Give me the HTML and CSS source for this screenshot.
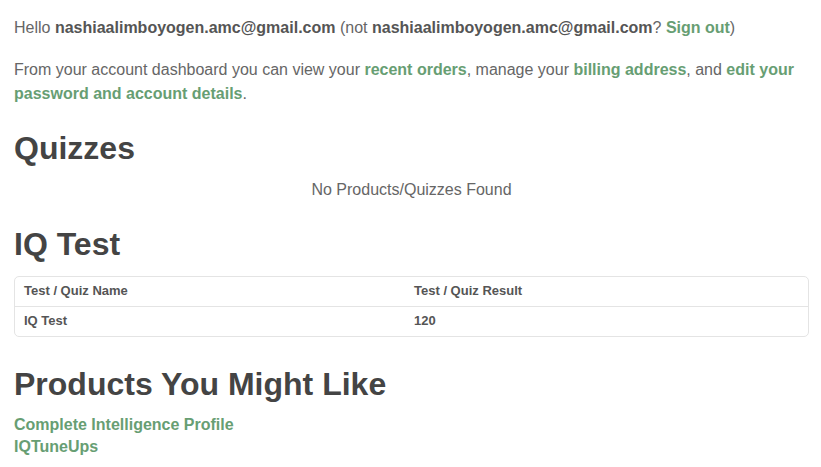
FILE: index.html
```html
<!DOCTYPE html>
<html lang="en">
<head>
    <meta charset="UTF-8">
    <meta name="viewport" content="width=device-width, initial-scale=1.0">
    <title>My Account</title>
    <link rel="stylesheet" href="styles.css">
</head>
<body>
    <div class="account">
        <p class="greeting">Hello <strong>nashiaalimboyogen.amc@gmail.com</strong> (not <strong>nashiaalimboyogen.amc@gmail.com</strong>? <a href="#">Sign out</a>)</p>

        <p class="intro">From your account dashboard you can view your <a href="#">recent orders</a>, manage your <a href="#">billing address</a>, and <a href="#">edit your password and account details</a>.</p>

        <!-- Quizzes -->
        <h2>Quizzes</h2>
        <div class="empty">No Products/Quizzes Found</div>

        <!-- Results -->
        <h2>IQ Test</h2>
        <div class="results">
            <table>
                <thead>
                    <tr>
                        <th class="name-col">Test / Quiz Name</th>
                        <th>Test / Quiz Result</th>
                    </tr>
                </thead>
                <tbody>
                    <tr>
                        <td>IQ Test</td>
                        <td>120</td>
                    </tr>
                </tbody>
            </table>
        </div>

        <!-- Suggestions -->
        <h2 class="suggest-title">Products You Might Like</h2>
        <ul class="products">
            <li><a href="#">Complete Intelligence Profile</a></li>
            <li><a href="#">IQTuneUps</a></li>
        </ul>
    </div>
</body>
</html>
```

FILE: styles.css
```css
body {
    font-family: "Liberation Sans", Arial, sans-serif;
    font-size: 16px;
    line-height: 24px;
    color: #666;
    margin: 0;
    padding: 0;
    background-color: #fff;
}
.account {
    width: 795px;
    padding: 16px 12px 0 14px;
}
p {
    margin: 0;
}
strong {
    color: #555;
}
a {
    color: #679e73;
    font-weight: bold;
    text-decoration: none;
}
.intro {
    margin-top: 18px;
}
h2 {
    font-size: 32px;
    line-height: 38px;
    color: #444;
    margin: 23px 0 11px;
}
.empty {
    text-align: center;
}
.results {
    border: 1px solid #e4e4e4;
    border-radius: 5px;
    margin-top: 13px;
}
table {
    width: 100%;
    border-collapse: collapse;
    font-size: 13px;
    line-height: 16px;
    color: #555;
}
th, td {
    text-align: left;
    font-weight: bold;
    padding: 6px 9px 7px;
}
.name-col {
    width: 372px;
}
tbody td {
    border-top: 1px solid #e4e4e4;
}
.suggest-title {
    margin-top: 28px;
}
.products {
    list-style: none;
    margin: 2px 0 0;
    padding: 0;
    line-height: 22px;
}
```
